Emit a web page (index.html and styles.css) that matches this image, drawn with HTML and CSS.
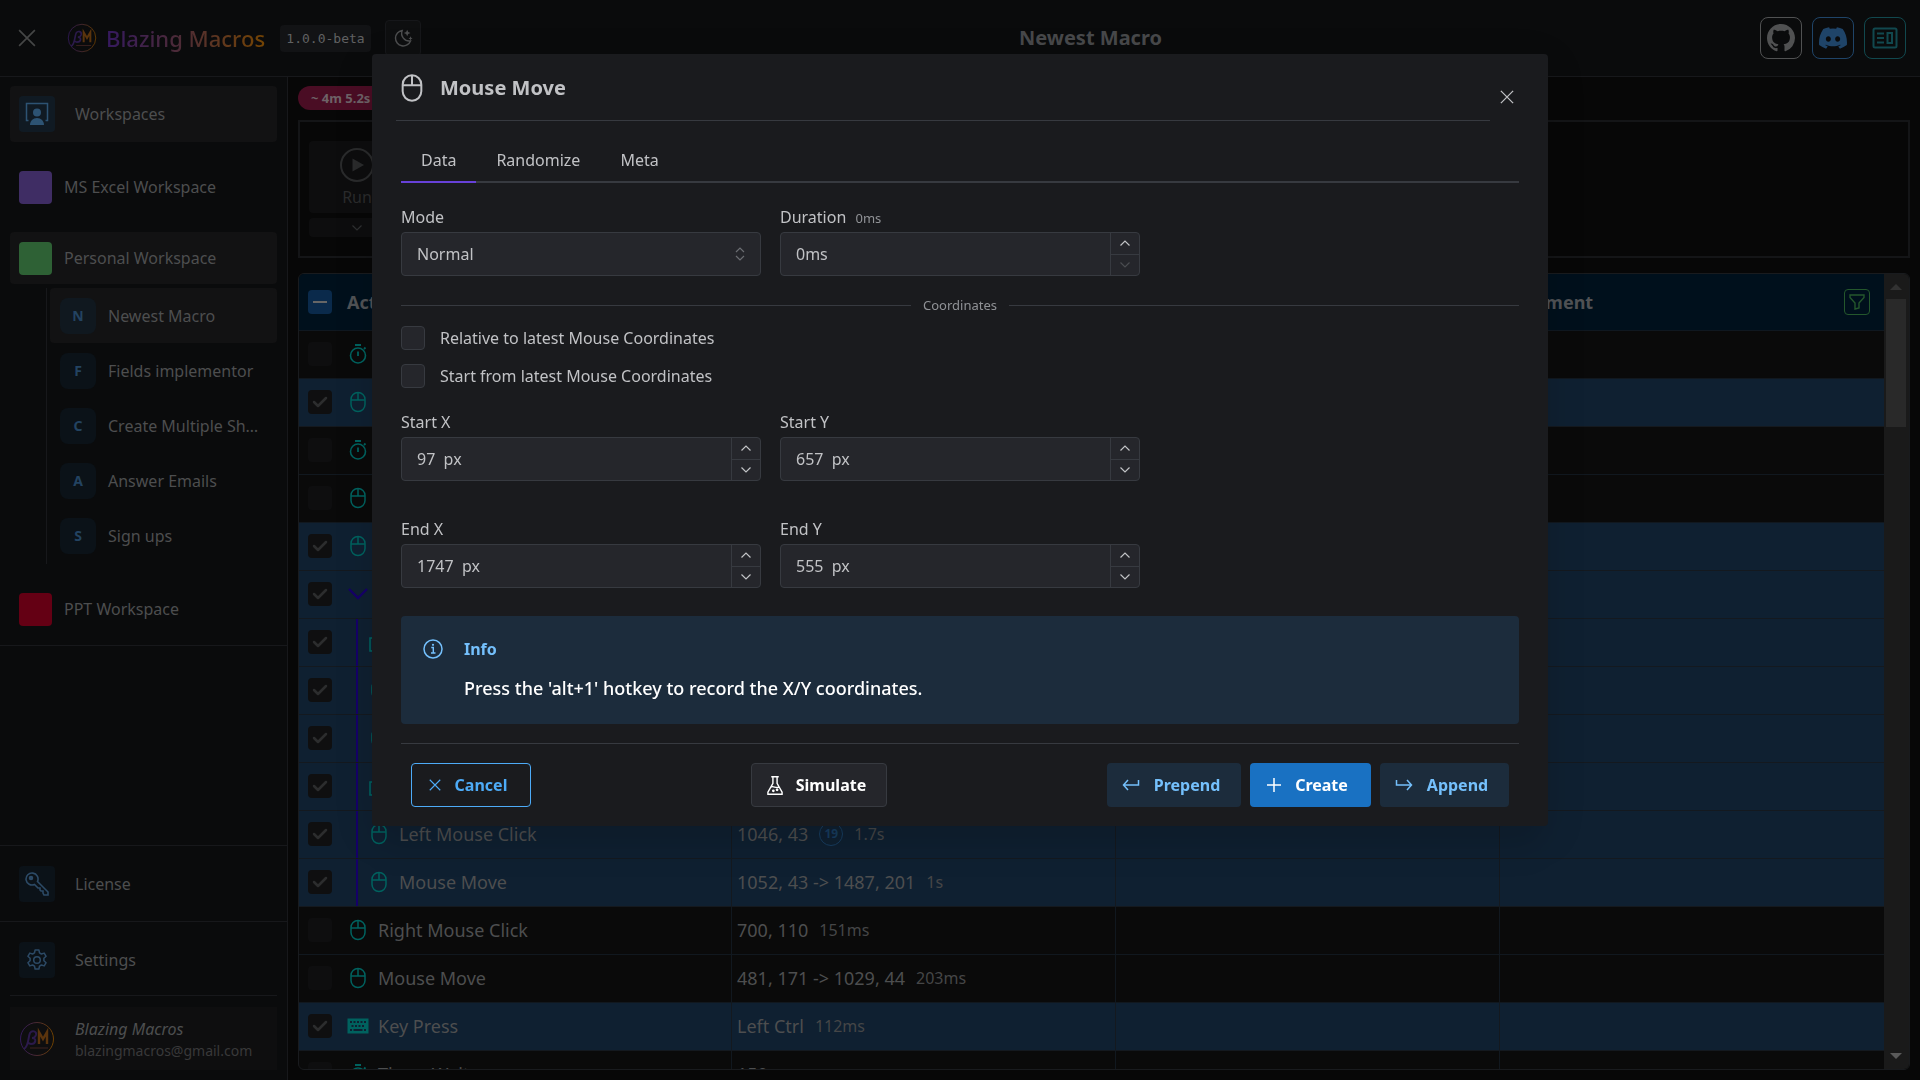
FILE: index.html
```html
<!DOCTYPE html>
<html lang="en">
<head>
<meta charset="utf-8">
<title>Blazing Macros</title>
<link rel="stylesheet" href="styles.css">
</head>
<body>
<svg class="sprite" aria-hidden="true">
  <defs>
    <linearGradient id="brand" x1="0" x2="1" y1="0" y2="0"><stop offset="0" stop-color="#311959"/><stop offset=".5" stop-color="#4a2a30"/><stop offset="1" stop-color="#6d4000"/></linearGradient>
    <symbol id="mouse" viewBox="0 0 24 24"><rect x="5" y="2.5" width="14" height="19" rx="7" fill="none" stroke="currentColor" stroke-width="1.5"/><path d="M5 10h14M12 2.5V10" fill="none" stroke="currentColor" stroke-width="1.5"/></symbol>
    <symbol id="timer" viewBox="0 0 24 24"><circle cx="12" cy="13.5" r="7.500" fill="none" stroke="currentColor" stroke-width="1.6"/><path d="M9 3h6M12 9.5v4.500M18 7l1.500-1.500" fill="none" stroke="currentColor" stroke-width="1.8"/></symbol>
    <symbol id="keyboard" viewBox="0 0 24 24"><path fill="currentColor" fill-rule="evenodd" d="M1.500 4.500h21v15h-21zM4 7v2h2V7zm3.500 0v2h2V7zM11 7v2h2V7zm3.500 0v2h2V7zM18 7v2h2V7zM5.500 11v2h2v-2zm3.500 0v2h2v-2zm3.500 0v2h2v-2zm3.500 0v2h2v-2zM4 15v2h2v-2zm3.500 0v2h9v-2zM18 15v2h2v-2z"/></symbol>
    <symbol id="copy" viewBox="0 0 24 24"><path d="M3 8h12v13H3zM8 8V3h13v13h-6" fill="none" stroke="currentColor" stroke-width="1.6"/></symbol>
    <symbol id="up" viewBox="0 0 12 12"><path d="M1.500 8.500L6 4l4.500 4.500" fill="none" stroke="currentColor" stroke-width="1.200"/></symbol>
    <symbol id="down" viewBox="0 0 12 12"><path d="M1.500 3.500L6 8l4.500-4.500" fill="none" stroke="currentColor" stroke-width="1.200"/></symbol>
    <symbol id="cross" viewBox="0 0 16 16"><path d="M1 1l14 14M15 1L1 15" fill="none" stroke="currentColor" stroke-width="1.500"/></symbol>
    <symbol id="logo" viewBox="0 0 36 36"><circle cx="18" cy="18" r="16.500" fill="none" stroke="url(#brand)" stroke-width="1"/><path d="M5 28c5-3 4-12 6-16 2-3 7-2 6 2-1 3-4 3-4 3 5 0 4 6-1 6l-3-1" fill="none" stroke="#2b1a4b" stroke-width="2"/><path d="M20 23V11l4 7 4-7v12" fill="none" stroke="#5a340d" stroke-width="2.400"/><path d="M11 27h18" stroke="#3d2320" stroke-width="1"/></symbol>
  </defs>
</svg>

<div class="app">
  <header class="topbar">
    <button class="plain burger" aria-label="Close menu"><svg width="18" height="18"><use href="#cross"/></svg></button>
    <svg class="logo" width="30" height="30"><use href="#logo"/></svg>
    <span class="brand">Blazing Macros</span>
    <code class="version">1.0.0-beta</code>
    <button class="theme" aria-label="Theme"><svg width="20" height="20" viewBox="0 0 24 24" fill="none" stroke="currentColor" stroke-width="1.700"><path d="M11 3a9.300 9.300 0 1 0 10 12.500A9.300 9.300 0 0 1 11 3z"/><path fill="currentColor" stroke="none" d="M17 2l1.200 2.800L21 6l-2.800 1.200L17 10l-1.200-2.800L13 6l2.800-1.200zM21 10l.8 1.700 1.700.8-1.700.8L21 15l-.8-1.700-1.700-.8 1.700-.8z"/></svg></button>
    <h1 class="page-title">Newest Macro</h1>
    <nav class="links">
      <a href="#" class="link github" aria-label="GitHub"><svg width="28" height="28" viewBox="0 0 16 16" fill="currentColor"><path d="M8 0C3.580 0 0 3.580 0 8c0 3.540 2.290 6.530 5.470 7.590.4.070.55-.17.55-.38 0-.19-.01-.82-.01-1.490-2.010.37-2.530-.49-2.690-.94-.09-.23-.48-.94-.82-1.130-.28-.15-.68-.52-.01-.53.63-.01 1.080.58 1.230.82.72 1.210 1.870.87 2.330.66.07-.52.28-.87.51-1.070-1.780-.2-3.640-.89-3.640-3.950 0-.87.31-1.590.82-2.150-.08-.2-.36-1.020.08-2.120 0 0 .67-.21 2.200.82.64-.18 1.320-.27 2-.27s1.360.09 2 .27c1.530-1.040 2.200-.82 2.200-.82.44 1.100.16 1.920.08 2.120.51.56.82 1.270.82 2.150 0 3.070-1.870 3.750-3.650 3.950.29.25.54.73.54 1.480 0 1.070-.01 1.930-.01 2.200 0 .21.15.46.55.38A8.010 8.010 0 0 0 16 8c0-4.420-3.580-8-8-8z"/></svg></a>
      <a href="#" class="link discord" aria-label="Discord"><svg width="28" height="28" viewBox="0 0 16 16" fill="currentColor"><path d="M13.545 2.907a13.200 13.200 0 0 0-3.257-1.011.05.05 0 0 0-.052.025c-.141.250-.297.577-.406.833a12.200 12.200 0 0 0-3.658 0 8 8 0 0 0-.412-.833.050.050 0 0 0-.052-.025c-1.125.194-2.220.534-3.257 1.011a.04.04 0 0 0-.021.018C.356 6.024-.213 9.047.066 12.032q.003.022.021.037a13.300 13.300 0 0 0 3.995 2.020.05.05 0 0 0 .056-.019q.463-.63.818-1.329a.05.05 0 0 0-.01-.059l-.018-.011a9 9 0 0 1-1.248-.595.05.05 0 0 1-.02-.066l.015-.019q.127-.095.248-.195a.05.05 0 0 1 .051-.007c2.619 1.196 5.454 1.196 8.041 0a.05.05 0 0 1 .053.007q.121.100.248.195a.05.05 0 0 1-.004.085 8 8 0 0 1-1.249.594.05.05 0 0 0-.03.03.05.05 0 0 0 .003.041c.240.465.515.909.817 1.329a.05.05 0 0 0 .056.019 13.200 13.200 0 0 0 4.001-2.020.05.05 0 0 0 .021-.037c.334-3.451-.559-6.449-2.366-9.106a.03.03 0 0 0-.020-.019m-8.198 7.307c-.789 0-1.438-.724-1.438-1.612s.637-1.613 1.438-1.613c.807 0 1.450.730 1.438 1.613 0 .888-.637 1.612-1.438 1.612m5.316 0c-.788 0-1.438-.724-1.438-1.612s.637-1.613 1.438-1.613c.807 0 1.451.730 1.438 1.613 0 .888-.631 1.612-1.438 1.612"/></svg></a>
      <a href="#" class="link news" aria-label="News"><svg width="26" height="22" viewBox="0 0 26 22" fill="none" stroke="currentColor" stroke-width="2"><rect x="1.500" y="1.500" width="23" height="19" rx="1.500"/><path d="M5 6.500h7M5 11h7M5 15.500h7"/><path d="M15.500 6h4.500v10h-4.500z"/></svg></a>
    </nav>
  </header>

  <aside class="sidebar">
    <nav class="groups">
      <a href="#" class="item big on"><span class="tile lit"><svg width="24" height="24" viewBox="0 0 24 24"><path d="M3.500 18.500h-2V1.500h21v17h-2" fill="none" stroke="currentColor" stroke-width="1.500"/><circle cx="12" cy="10.500" r="4" fill="currentColor"/><path d="M5 23c0-4 3-7 7-7s7 3 7 7z" fill="currentColor"/></svg></span>Workspaces</a>
      <a href="#" class="item ws"><span class="swatch violet"></span>MS Excel Workspace</a>
      <a href="#" class="item ws on"><span class="swatch green"></span>Personal Workspace</a>
      <div class="children">
        <a href="#" class="item child on"><span class="letter">N</span><span class="cut">Newest Macro</span></a>
        <a href="#" class="item child"><span class="letter">F</span><span class="cut">Fields implementor</span></a>
        <a href="#" class="item child"><span class="letter">C</span><span class="cut">Create Multiple Sh…</span></a>
        <a href="#" class="item child"><span class="letter">A</span><span class="cut">Answer Emails</span></a>
        <a href="#" class="item child"><span class="letter">S</span><span class="cut">Sign ups</span></a>
      </div>
      <a href="#" class="item ws"><span class="swatch red"></span>PPT Workspace</a>
    </nav>
    <div class="bottom">
      <a href="#" class="item foot"><span class="tile"><svg width="24" height="24" viewBox="0 0 24 24" fill="none" stroke="currentColor" stroke-width="1.600"><path d="M12.500 9.500L23 20v3h-4l-1-2v-2h-2l-1-1v-2h-2l-3.500-3.500A6 6 0 1 1 12.500 9.500z"/><circle cx="6" cy="6" r="1.500" fill="currentColor"/></svg></span>License</a>
      <a href="#" class="item foot"><span class="tile"><svg width="24" height="24" viewBox="0 0 24 24" fill="none" stroke="currentColor" stroke-width="1.500"><path d="M10.100 2h3.800l.6 2.900 1.900 1.100 2.800-.9 1.900 3.200-2.200 2v2.400l2.200 2-1.900 3.200-2.800-.9-1.900 1.100-.6 2.900h-3.800l-.6-2.900L7.600 17l-2.800.9-1.900-3.200 2.200-2v-2.400l-2.200-2 1.900-3.200 2.800.9 1.900-1.100z" stroke-linejoin="round"/><circle cx="12" cy="12" r="3.300"/></svg></span>Settings</a>
      <div class="user"><svg width="36" height="36"><use href="#logo"/></svg><div><em>Blazing Macros</em><small>blazingmacros@gmail.com</small></div></div>
    </div>
  </aside>

  <main class="main">
    <span class="badge">~ 4m 5.2s</span>
    <section class="toolbar">
      <button class="run"><svg width="34" height="34" viewBox="0 0 34 34"><circle cx="17" cy="17" r="16" fill="none" stroke="currentColor" stroke-width="2"/><path d="M12.500 10.500L24 17l-11.500 6.500z" fill="currentColor"/></svg>Run</button>
      <button class="more" aria-label="More run options"><svg width="12" height="12"><use href="#down"/></svg></button>
    </section>
    <div class="grid">
      <div class="scroll">
        <table>
          <colgroup><col class="first"><col><col><col></colgroup>
          <thead><tr>
            <th><div class="cell"><label class="box all"><input type="checkbox" aria-label="Select all"><svg width="14" height="24" viewBox="0 0 14 24"><path d="M0 12h14" stroke="currentColor" stroke-width="2"/></svg></label><span class="th">Actions</span></div></th>
            <th></th><th></th>
            <th><div class="cell spread"><span>Comment</span><button class="filter" aria-label="Filter"><svg width="16" height="16" viewBox="0 0 16 16" fill="none" stroke="currentColor" stroke-width="1.400"><path d="M1 1h14v2.500L10 9v5l-4 1V9L1 3.500z"/></svg></button></div></th>
          </tr></thead>
          <tbody id="rows"></tbody>
        </table>
      </div>
      <div class="rail"><span class="arrow top"></span><span class="thumb"></span><span class="arrow last"></span></div>
    </div>
  </main>
</div>

<div class="overlay">
  <section class="modal" role="dialog" aria-labelledby="dlg">
    <header class="m-head">
      <h2 id="dlg"><svg width="32" height="32"><use href="#mouse"/></svg>Mouse Move</h2>
      <button class="plain close" aria-label="Close"><svg width="14" height="14"><use href="#cross"/></svg></button>
    </header>
    <div class="m-body">
      <div class="tabs" role="tablist"><button role="tab" class="tab active">Data</button><button role="tab" class="tab">Randomize</button><button role="tab" class="tab">Meta</button></div>
      <div class="fields">
        <div class="field"><label for="mode">Mode</label><div class="control"><select id="mode"><option>Normal</option></select><svg class="chevrons" width="10" height="14" viewBox="0 0 10 14" fill="none" stroke="currentColor" stroke-width="1.200"><path d="M1 5l4-4 4 4M1 9l4 4 4-4"/></svg></div></div>
        <div class="field"><label for="dur">Duration <small>0ms</small></label><div class="control"><input id="dur" type="text" value="0ms"><span class="spin"><button aria-label="Increase"><svg width="12" height="12"><use href="#up"/></svg></button><button class="off" aria-label="Decrease"><svg width="12" height="12"><use href="#down"/></svg></button></span></div></div>
      </div>
      <div class="divider">Coordinates</div>
      <label class="check"><input type="checkbox">Relative to latest Mouse Coordinates</label>
      <label class="check"><input type="checkbox">Start from latest Mouse Coordinates</label>
      <div class="fields">
        <div class="field"><label for="sx">Start X</label><div class="control"><input id="sx" type="text" value="97&nbsp; px"><span class="spin"><button aria-label="Increase"><svg width="12" height="12"><use href="#up"/></svg></button><button aria-label="Decrease"><svg width="12" height="12"><use href="#down"/></svg></button></span></div></div>
        <div class="field"><label for="sy">Start Y</label><div class="control"><input id="sy" type="text" value="657&nbsp; px"><span class="spin"><button aria-label="Increase"><svg width="12" height="12"><use href="#up"/></svg></button><button aria-label="Decrease"><svg width="12" height="12"><use href="#down"/></svg></button></span></div></div>
      </div>
      <div class="fields spaced">
        <div class="field"><label for="ex">End X</label><div class="control"><input id="ex" type="text" value="1747&nbsp; px"><span class="spin"><button aria-label="Increase"><svg width="12" height="12"><use href="#up"/></svg></button><button aria-label="Decrease"><svg width="12" height="12"><use href="#down"/></svg></button></span></div></div>
        <div class="field"><label for="ey">End Y</label><div class="control"><input id="ey" type="text" value="555&nbsp; px"><span class="spin"><button aria-label="Increase"><svg width="12" height="12"><use href="#up"/></svg></button><button aria-label="Decrease"><svg width="12" height="12"><use href="#down"/></svg></button></span></div></div>
      </div>
      <div class="info">
        <svg width="20" height="20" viewBox="0 0 20 20"><circle cx="10" cy="10" r="9" fill="none" stroke="currentColor" stroke-width="1.500"/><path d="M8.300 8.500h2v5M8 14h4.500" fill="none" stroke="currentColor" stroke-width="1.400"/><circle cx="10" cy="5.800" r="1.100" fill="currentColor"/></svg>
        <div><strong>Info</strong><p>Press the 'alt+1' hotkey to record the X/Y coordinates.</p></div>
      </div>
      <footer class="actions">
        <button class="btn outline"><svg width="12" height="12"><use href="#cross"/></svg>Cancel</button>
        <button class="btn gray"><svg width="18" height="20" viewBox="0 0 20 24" fill="none" stroke="currentColor" stroke-width="1.700"><path d="M5.500 2h9M7.500 2v8L1.500 20.500V23h17v-2.500L12.500 10V2M5 14.500c3-2 6 2 10 0"/><circle cx="8" cy="19" r=".8"/><circle cx="12.500" cy="17.800" r=".8"/></svg>Simulate</button>
        <span class="group">
          <button class="btn light prepend"><svg width="18" height="14" viewBox="0 0 18 14" fill="none" stroke="currentColor" stroke-width="1.500"><path d="M16.500 2v5H1.500M6 2L1.500 7 6 12"/></svg>Prepend</button>
          <button class="btn filled"><svg width="14" height="14" viewBox="0 0 14 14" stroke="currentColor" stroke-width="1.500"><path d="M7 0v14M0 7h14"/></svg>Create</button>
          <button class="btn light append"><svg width="18" height="14" viewBox="0 0 18 14" fill="none" stroke="currentColor" stroke-width="1.500"><path d="M1.500 2v5h15M12 2l4.500 5-4.500 5"/></svg>Append</button>
        </span>
      </footer>
    </div>
  </section>
</div>
<script src="rows.js"></script>
</body>
</html>
```
FILE: rows.js
```js
// selected, icon, nested, name, detail, repeat count, duration
const rows = [
  [0, 'timer', 0], [1, 'mouse', 0], [0, 'timer', 0], [0, 'mouse', 0], [1, 'mouse', 0],
  [1, 'down', 0], [1, 'copy', 1], [1, 'mouse', 1], [1, 'mouse', 1], [1, 'copy', 1],
  [1, 'mouse', 1, 'Left Mouse Click', '1046, 43', '19', '1.7s'],
  [1, 'mouse', 1, 'Mouse Move', '1052, 43 -&gt; 1487, 201', '', '1s'],
  [0, 'mouse', 0, 'Right Mouse Click', '700, 110', '', '151ms'],
  [0, 'mouse', 0, 'Mouse Move', '481, 171 -&gt; 1029, 44', '', '203ms'],
  [1, 'keyboard', 0, 'Key Press', 'Left Ctrl', '', '112ms'],
  [0, 'timer', 0, 'Timer Wait', '150ms', '', '']
];
document.getElementById('rows').innerHTML = rows.map(([on, icon, nested, name = '', detail = '', count = '', time = '']) => `
  <tr class="${on ? 'picked' : ''}">
    <td class="${nested ? 'nested' : ''}"><div class="cell">
      <label class="box"><input type="checkbox" ${on ? 'checked' : ''} aria-label="Select row">${on ? '<svg width="16" height="24" viewBox="0 0 16 24"><path d="M2 12l4 4 8-8" fill="none" stroke="currentColor" stroke-width="2.500" stroke-linecap="round" stroke-linejoin="round"/></svg>' : ''}</label>
      <svg class="kind ${icon}" width="24" height="24"><use href="#${icon}"/></svg><span>${name}</span></div></td>
    <td><div class="cell">${detail}${count ? `<span class="count">${count}</span>` : ''}${time ? `<small>${time}</small>` : ''}</div></td>
    <td></td><td></td>
  </tr>`).join('');
```
FILE: styles.css
```css
* { box-sizing: border-box; }
body {
  margin: 0;
  height: 100vh;
  overflow: hidden;
  background: #070707;
  color: #4d4e4f;
  font: 16px/24px "Noto Sans", "Open Sans", sans-serif;
}
button, input, select { font: inherit; color: inherit; margin: 0; }
button { padding: 0; border: 0; background: none; display: flex; align-items: center; justify-content: center; }
a { color: inherit; text-decoration: none; }
svg { flex: none; display: block; }
.sprite { position: absolute; width: 0; height: 0; }

.app { height: 100vh; display: grid; grid-template: 77px minmax(0, 1fr) / 288px minmax(0, 1fr); }

/* top bar */
.topbar { grid-column: 1 / 3; display: flex; align-items: center; background: #0a0b0c; border-bottom: 1px solid #17181b; padding: 0 14px 0 18px; }
.burger { color: #454646; }
.logo { margin-left: 31px; }
.brand { margin-left: 9px; width: 164px; white-space: nowrap; font: 500 22px/32px "Noto Sans", sans-serif; background: linear-gradient(90deg, #35195f, #4f2d32 50%, #774600); -webkit-background-clip: text; background-clip: text; color: transparent; }
.version { margin-left: 10px; width: 91px; height: 27px; border-radius: 4px; background: #121315; text-align: center; font: 13px/27px "DejaVu Sans Mono", monospace; color: #606162; }
.theme { margin-left: 14px; width: 36px; height: 36px; border: 1px solid #16171a; border-radius: 4px; background: #0e0f10; }
.page-title { flex: 1; margin: 0; text-align: center; font: 700 20px/28px "Noto Sans", sans-serif; color: #47484a; white-space: nowrap; }
.links { display: flex; gap: 10px; }
.link { width: 42px; height: 42px; border: 1px solid; border-radius: 8px; display: flex; align-items: center; justify-content: center; }
.github { color: #505152; }
.discord { color: #1f4468; }
.news { color: #11484e; }

/* sidebar */
.sidebar { background: #0a0b0c; border-right: 1px solid #17181b; display: flex; flex-direction: column; justify-content: space-between; }
.groups { padding: 9px 10px 10px; border-bottom: 1px solid #17181b; }
.item { display: flex; align-items: center; padding-left: 9px; border-radius: 4px; }
.on { background: #121213; }
.big { height: 56px; margin-bottom: 19px; gap: 20px; }
.ws { height: 52px; gap: 12px; }
.ws + .ws { margin-top: 19px; }
.swatch { width: 33px; height: 33px; border-radius: 4px; }
.violet { background: #3f2d64; }
.green { background: #2e6135; }
.red { background: #640014; }
.children { margin: 4px 0 19px 36px; padding: 0 0 1px 3px; border-left: 1px solid #17181b; }
.child { height: 55px; padding-left: 10px; gap: 12px; }
.letter { width: 36px; height: 36px; border-radius: 8px; background: #0b1218; color: #234361; font: 700 14px/36px "Noto Sans", sans-serif; text-align: center; }
.on .letter { background: #10181f; }
.cut { white-space: nowrap; }
.tile { width: 36px; height: 36px; border-radius: 4px; background: #0b1218; color: #2c4a66; display: flex; align-items: center; justify-content: center; }
.lit { background: #101a23; color: #2d5373; }
.foot { height: 76px; border-top: 1px solid #17181b; border-radius: 0; padding-left: 19px; gap: 20px; }
.bottom { display: flex; flex-direction: column; }
.user { margin: 10px; height: 63px; background: #0e0e0f; display: flex; align-items: center; gap: 20px; padding-left: 9px; box-shadow: 0 -11px 0 #0a0b0c, 0 -12px 0 #17181b; }
.user div { display: flex; flex-direction: column; }
.user small { font-size: 14px; line-height: 20px; color: #39393a; }

/* workspace */
.main { padding: 9px 10px 10px; display: flex; flex-direction: column; align-items: stretch; min-height: 0; }
.badge { align-self: flex-start; height: 24px; width: 110px; padding-left: 13px; border-radius: 12px; background: #4a0d24; color: #6e6267; font: 700 13px/24px "Noto Sans", sans-serif; }
.toolbar { margin-top: 10px; height: 138px; border: 2px solid #141517; padding: 19px 9px; }
.run { width: 96px; height: 72px; padding-top: 5px; background: #0d0d0e; border-radius: 4px; flex-direction: column; color: #2a2b2c; line-height: 30px; }
.more { margin-top: 5px; width: 96px; height: 19px; background: #0d0d0e; border-radius: 4px; color: #2f3031; }
.grid { margin-top: 15px; flex: 1; min-height: 0; border: 1px solid #191b1e; border-radius: 6px; overflow: hidden; display: flex; background: #0a0a0a; }
.scroll { flex: 1; overflow: hidden; }
table { width: 100%; table-layout: fixed; border-collapse: separate; border-spacing: 0; font-size: 18px; }
.first { width: 433px; }
th { height: 57px; padding: 0 14px 0 5px; background: #00101c; border-bottom: 1px solid #101820; text-align: left; font: 700 18px/24px "Noto Sans", sans-serif; color: #505255; }
th:first-child, td:first-child { padding-left: 9px; }
td { height: 48px; padding: 0 5px 2px; border-bottom: 1px solid #11181f; border-right: 1px solid #11181f; white-space: nowrap; }
td:last-child { border-right: 0; }
.picked td { background-color: #0f2031; border-color: #14191f; }
.cell { display: flex; align-items: center; height: 45px; }
.spread { justify-content: space-between; }
.box { width: 24px; height: 24px; border-radius: 4px; background: #0e0e0f; color: #2c2d2e; display: flex; align-items: center; justify-content: center; margin-right: 14px; }
.picked .box { background: #0f0f10; }
.all { background: #0a2a4b; color: #666; margin-right: 15px; }
.box input { appearance: none; width: 0; height: 0; margin: 0; }
.kind { color: #00625f; margin-right: 8px; }
.down { color: #150068; }
.nested { background-image: linear-gradient(#150068, #150068); background-position: 57px 0; background-size: 2px 100%; background-repeat: no-repeat; background-clip: padding-box; }
.nested .kind { margin-left: 21px; }
td small { margin-left: 11px; font-size: 16px; color: #454647; }
.count { width: 24px; height: 24px; margin-left: 11px; border: 1px solid #173d60; border-radius: 12px; color: #173d60; font: 700 12px/22px "Noto Sans", sans-serif; text-align: center; }
.filter { width: 26px; height: 26px; border: 1px solid #24572c; border-radius: 4px; color: #24572c; }
.rail { width: 25px; background: #1a1a1a; padding: 10px 3px 10px 2px; display: flex; flex-direction: column; align-items: center; }
.arrow { border: 6px solid transparent; border-top-width: 0; border-bottom-color: #323232; }
.thumb { align-self: stretch; height: 128px; margin-top: 9px; background: #292929; }
.last { margin-top: auto; border-width: 6px 6px 0; border-color: #5a5a5a transparent transparent; }

/* dialog */
.overlay { position: fixed; inset: 0; display: flex; justify-content: center; align-items: flex-start; padding: 54px 24px; }
.modal { width: 1176px; padding: 0 24px 19px; background: #1a1b1e; border-radius: 4px; color: #c1c2c5; box-shadow: 0 36px 28px -7px rgba(0,0,0,.06), 0 10px 40px rgba(0,0,0,.12); }
.m-head { display: flex; align-items: flex-start; }
.m-head h2 { flex: 1; height: 67px; margin: 0 34px 0 0; padding-top: 2px; border-bottom: 1px solid #373a40; display: flex; align-items: center; gap: 12px; font: 700 20px/28px "Noto Sans", sans-serif; }
.close { margin: 36px 10px 0 -24px; }
.m-body { padding: 0 5px; }
.tabs { margin-top: 16px; display: flex; box-shadow: inset 0 -2px #373a40; }
.tab { height: 46px; padding: 2px 20px 0; border-bottom: 2px solid transparent; }
.active { border-bottom-color: #6741d9; }
.fields { display: flex; gap: 19px; margin-top: 22px; }
.field { flex: 0 1 360px; display: flex; flex-direction: column; gap: 3px; }
.field label { height: 24px; }
.field small { margin-left: 5px; font-size: 13px; color: #909296; }
.control { height: 44px; display: flex; align-items: center; background: #25262b; border: 1px solid #373a40; border-radius: 4px; overflow: hidden; }
.control input, .control select { flex: 1; min-width: 0; height: 42px; padding: 0 15px; border: 0; background: none; appearance: none; outline: 0; }
.chevrons { margin-right: 15px; color: #6b6d72; }
.spin { width: 29px; height: 42px; border-left: 1px solid #373a40; display: flex; flex-direction: column; }
.spin button { flex: 1; }
.spin button + button { border-top: 1px solid #373a40; }
.spin .off { color: #4a4c50; }
.divider { margin: 19px 0 11px; display: flex; align-items: center; gap: 12px; font-size: 13px; line-height: 20px; color: #909296; }
.divider::before, .divider::after { content: ""; flex: 1; border-top: 1px solid #373a40; }
.check { display: flex; align-items: center; gap: 15px; height: 24px; margin-bottom: 14px; }
.check input { appearance: none; margin: 0; width: 24px; height: 24px; border: 1px solid #373a40; border-radius: 4px; background: #25262b; }
.spaced { margin-top: 36px; }
.info { margin-top: 28px; height: 108px; padding: 21px 22px; display: flex; gap: 21px; background: #1c2c3c; border-radius: 4px; color: #74c0fc; }
.info svg { margin-top: 2px; }
.info strong { display: block; }
.info p { margin: 14px 0 0; color: #fff; font: 500 18px/26px "Noto Sans", sans-serif; }
.actions { margin-top: 19px; padding: 19px 10px 0; border-top: 1px solid #373a40; display: flex; justify-content: space-between; }
.btn { height: 44px; border: 1px solid transparent; border-radius: 4px; gap: 14px; font-weight: 700; padding-right: 6px; }
.outline { width: 120px; color: #4dabf7; border-color: #4dabf7; }
.gray { width: 136px; background: #25262b; border-color: #373a40; color: #fff; gap: 12px; }
.light { background: #1c2c3c; color: #74c0fc; }
.filled { width: 121px; background: #1971c2; color: #fff; }
.group { display: flex; gap: 9px; }
.prepend { width: 134px; }
.append { width: 129px; }
```
